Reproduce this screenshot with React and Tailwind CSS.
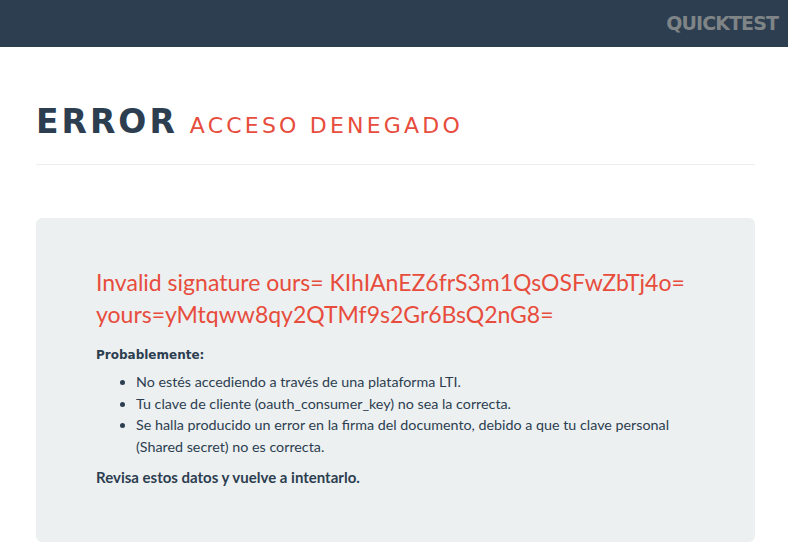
export default function App() {
  return (
    <div className="min-h-[556px] bg-white font-['Lato',sans-serif] text-[#2c3e50]">
      <header className="h-[47px] bg-[#2c3e50] flex items-center justify-end pr-[10px]">
        <span className="font-['DejaVu_Sans',sans-serif] font-bold text-[19px] tracking-[-0.9px] text-[#7f8487]">
          QUICKTEST
        </span>
      </header>

      <main className="pl-[36px] pr-[33px]">
        <div className="pt-[55px] pb-[22px] border-b border-[#eeeeee] flex items-baseline gap-[12px] font-['DejaVu_Sans',sans-serif]">
          <h1 className="text-[33px] leading-[40px] font-bold text-[#2c3e50] tracking-[3px]">ERROR</h1>
          <span className="text-[22px] text-[#e74c3c] tracking-[3.2px]">ACCESO DENEGADO</span>
        </div>

        <section className="mt-[53px] rounded-[6px] bg-[#ecf0f1] px-[60px] pt-[48px] pb-[53px]">
          <p className="text-[23px] leading-[32px] text-[#e74c3c]">
            Invalid signature ours= KIhIAnEZ6frS3m1QsOSFwZbTj4o= yours=yMtqww8qy2QTMf9s2Gr6BsQ2nG8=
          </p>
          <p className="mt-[16px] font-['DejaVu_Sans',sans-serif] text-[12px] font-bold">Probablemente:</p>
          <ul className="mt-[7px] pl-[40px] list-disc text-[14.3px] leading-[21.5px]">
            <li>No estés accediendo a través de una plataforma LTI.</li>
            <li>Tu clave de cliente (oauth_consumer_key) no sea la correcta.</li>
            <li>
              Se halla producido un error en la firma del documento, debido a que tu clave personal
              (Shared secret) no es correcta.
            </li>
          </ul>
          <p className="mt-[9px] text-[15px] font-bold">Revisa estos datos y vuelve a intentarlo.</p>
        </section>
      </main>
    </div>
  )
}
